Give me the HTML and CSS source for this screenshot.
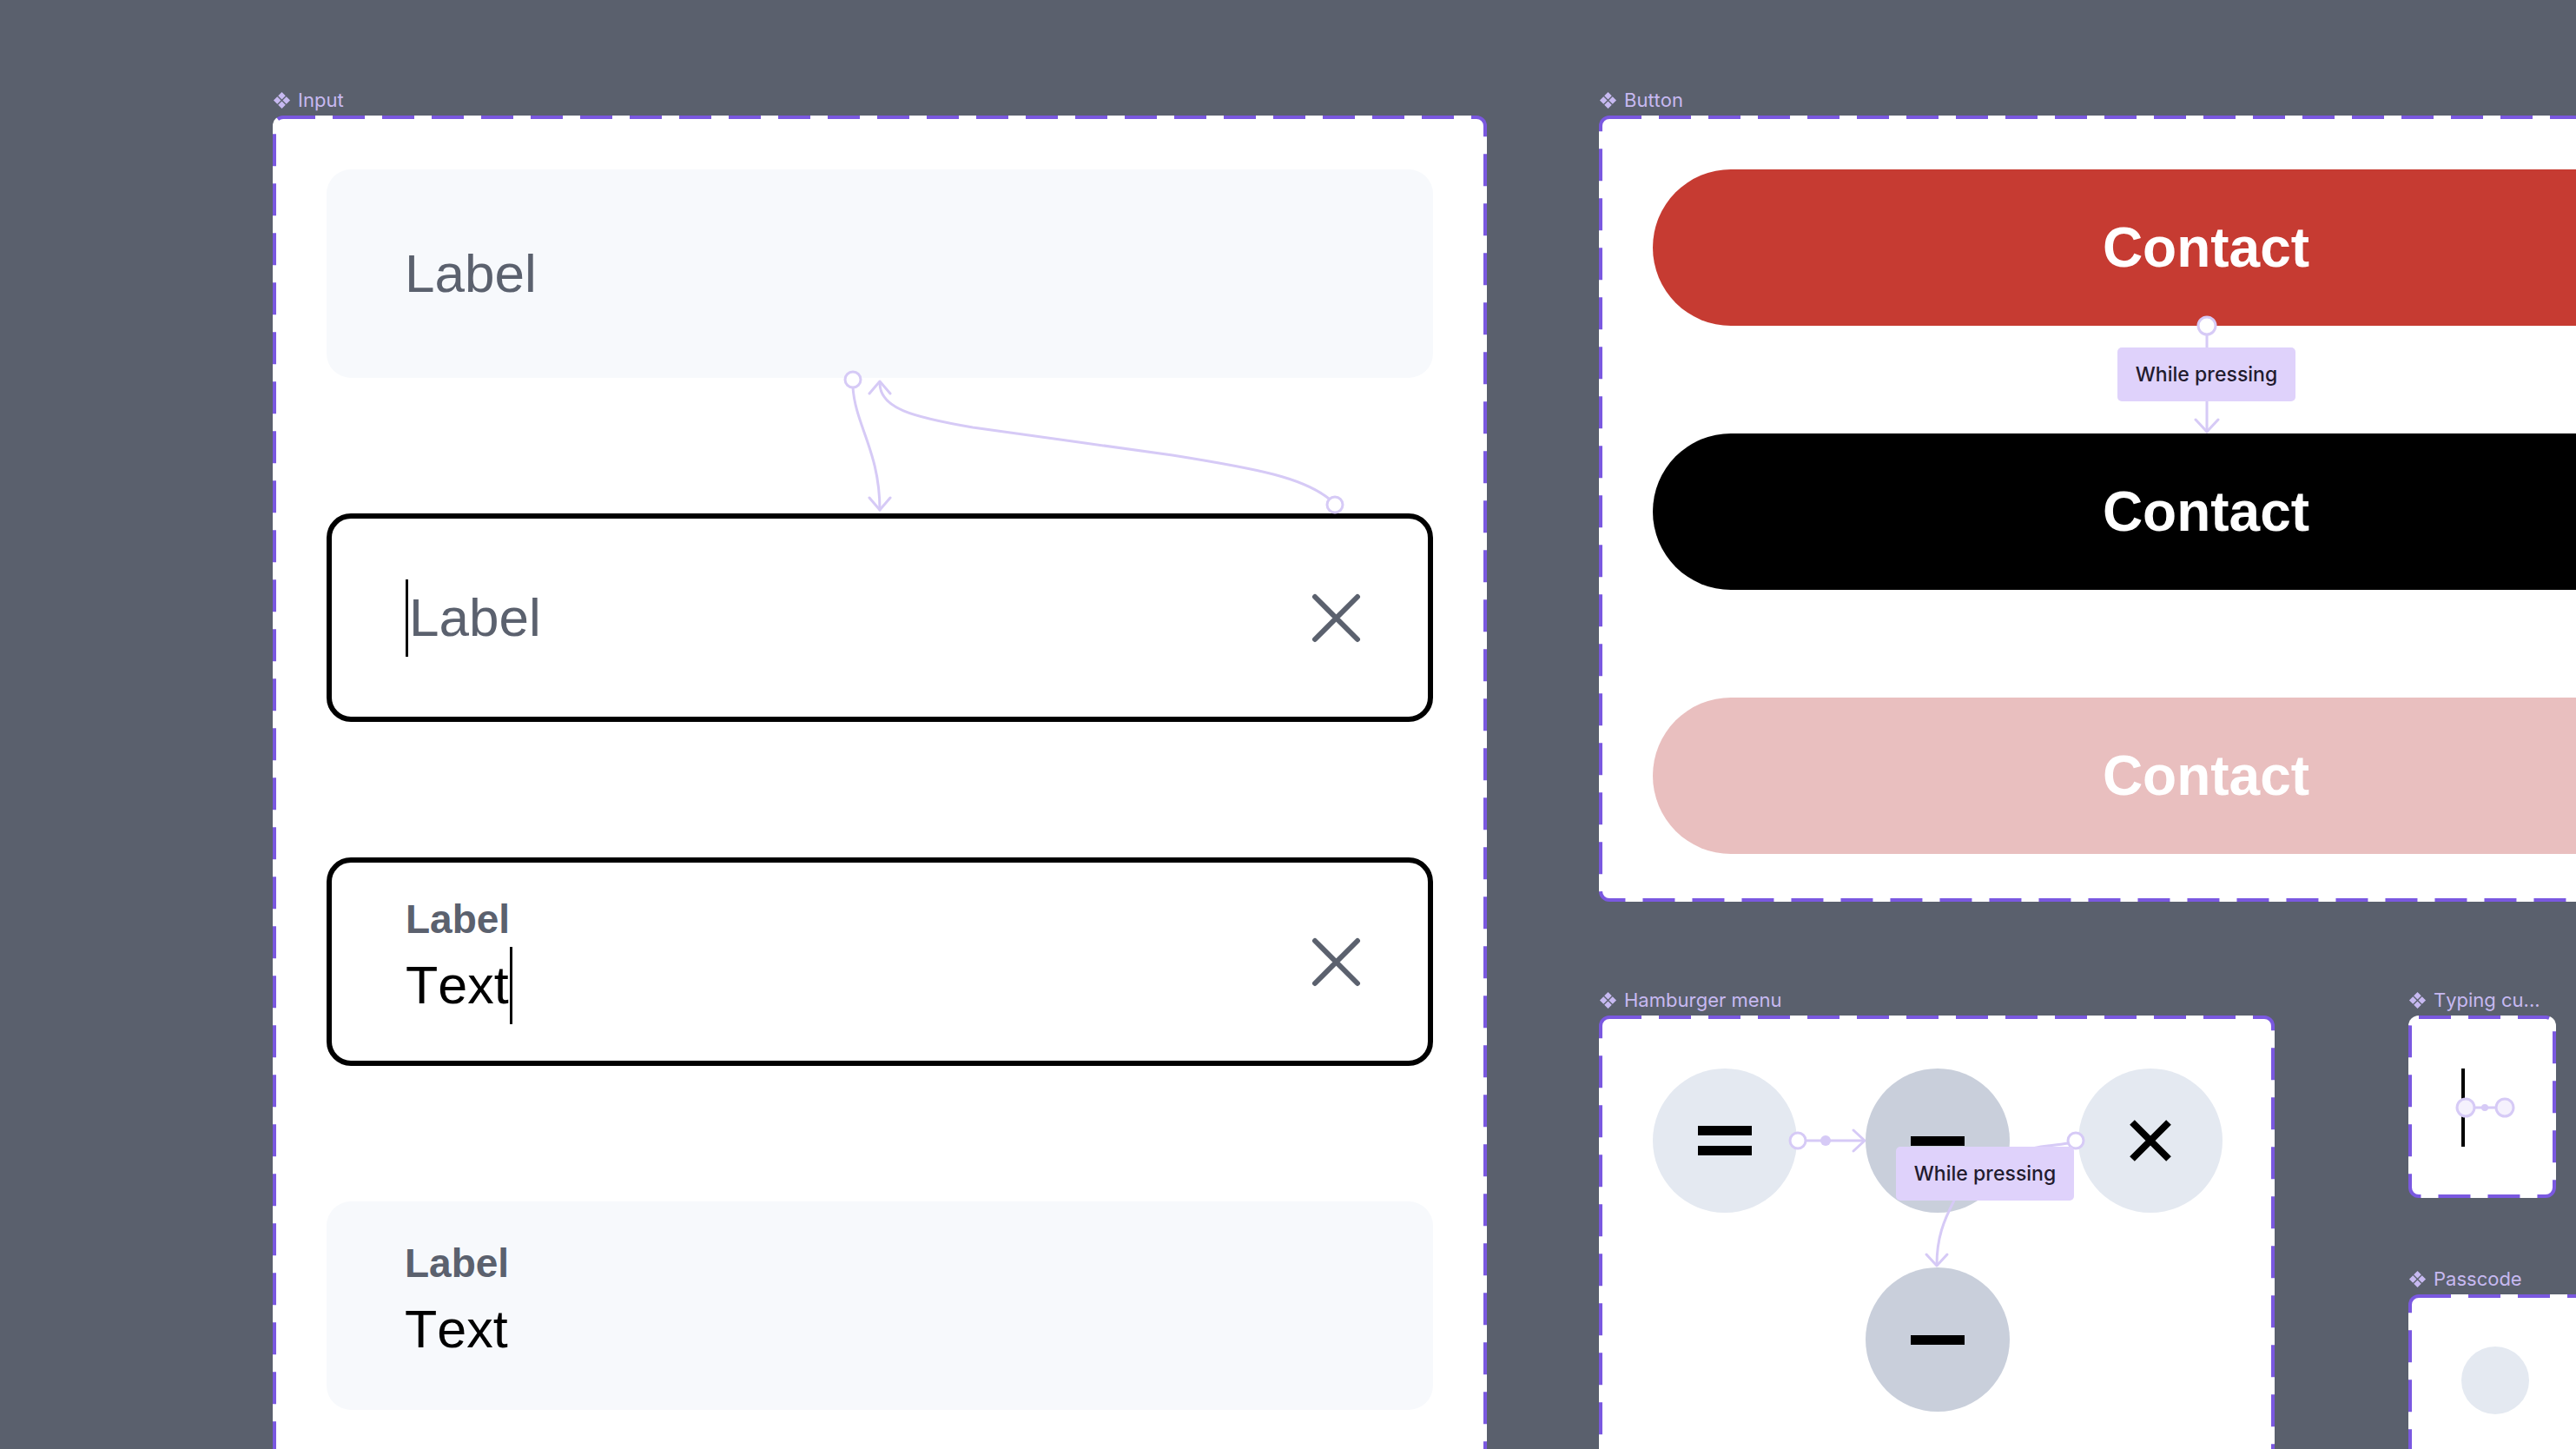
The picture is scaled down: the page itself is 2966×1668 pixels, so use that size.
FILE: index.html
```html
<!DOCTYPE html>
<html lang="en">
<head>
    <meta charset="UTF-8">
    <title>Components</title>
    <link rel="stylesheet" href="styles.css">
</head>
<body>
    <div class="canvas">

        <!-- Input -->
        <section class="frame-wrap input-wrap">
            <div class="frame-label">
                <svg class="comp-icon" viewBox="0 0 22 22"><path d="M11 1l4.5 4.5L11 10 6.5 5.5zM5.5 6.5L10 11l-4.5 4.5L1 11zM16.5 6.5L21 11l-4.5 4.5L12 11zM11 12l4.5 4.5L11 21l-4.5-4.5z"/></svg>
                <span>Input</span>
            </div>
            <div class="frame input-frame">
                <div class="field field-filled">
                    <span class="placeholder">Label</span>
                </div>
                <div class="field field-outline">
                    <div class="value">
                        <span class="caret"></span>
                        <span class="placeholder">Label</span>
                    </div>
                    <svg class="clear" viewBox="0 0 57 57"><path d="M4 4L53 53M53 4L4 53"/></svg>
                </div>
                <div class="field field-outline">
                    <div class="field-content">
                        <span class="small-label">Label</span>
                        <div class="value">
                            <span>Text</span>
                            <span class="caret"></span>
                        </div>
                    </div>
                    <svg class="clear" viewBox="0 0 57 57"><path d="M4 4L53 53M53 4L4 53"/></svg>
                </div>
                <div class="field field-filled">
                    <div class="field-content">
                        <span class="small-label">Label</span>
                        <div class="value">
                            <span>Text</span>
                        </div>
                    </div>
                </div>
            </div>
        </section>

        <!-- Button -->
        <section class="frame-wrap button-wrap">
            <div class="frame-label">
                <svg class="comp-icon" viewBox="0 0 22 22"><path d="M11 1l4.5 4.5L11 10 6.5 5.5zM5.5 6.5L10 11l-4.5 4.5L1 11zM16.5 6.5L21 11l-4.5 4.5L12 11zM11 12l4.5 4.5L11 21l-4.5-4.5z"/></svg>
                <span>Button</span>
            </div>
            <div class="frame button-frame">
                <div class="btn btn-red">Contact</div>
                <div class="btn btn-black">Contact</div>
                <div class="btn btn-pink">Contact</div>
            </div>
        </section>

        <!-- Hamburger menu -->
        <section class="frame-wrap burger-wrap">
            <div class="frame-label">
                <svg class="comp-icon" viewBox="0 0 22 22"><path d="M11 1l4.5 4.5L11 10 6.5 5.5zM5.5 6.5L10 11l-4.5 4.5L1 11zM16.5 6.5L21 11l-4.5 4.5L12 11zM11 12l4.5 4.5L11 21l-4.5-4.5z"/></svg>
                <span>Hamburger menu</span>
            </div>
            <div class="frame burger-frame">
                <div class="burger light">
                    <div class="bars">
                        <span class="bar"></span>
                        <span class="bar"></span>
                    </div>
                </div>
                <div class="burger dark">
                    <span class="bar"></span>
                </div>
                <div class="burger light">
                    <svg class="close" viewBox="0 0 48 48"><path d="M3 3L45 45M45 3L3 45"/></svg>
                </div>
                <div class="burger dark second-row">
                    <span class="bar"></span>
                </div>
            </div>
        </section>

        <!-- Typing cursor -->
        <section class="frame-wrap typing-wrap">
            <div class="frame-label">
                <svg class="comp-icon" viewBox="0 0 22 22"><path d="M11 1l4.5 4.5L11 10 6.5 5.5zM5.5 6.5L10 11l-4.5 4.5L1 11zM16.5 6.5L21 11l-4.5 4.5L12 11zM11 12l4.5 4.5L11 21l-4.5-4.5z"/></svg>
                <span>Typing cu...</span>
            </div>
            <div class="frame typing-frame">
                <span class="typing-caret"></span>
            </div>
        </section>

        <!-- Passcode -->
        <section class="frame-wrap passcode-wrap">
            <div class="frame-label">
                <svg class="comp-icon" viewBox="0 0 22 22"><path d="M11 1l4.5 4.5L11 10 6.5 5.5zM5.5 6.5L10 11l-4.5 4.5L1 11zM16.5 6.5L21 11l-4.5 4.5L12 11zM11 12l4.5 4.5L11 21l-4.5-4.5z"/></svg>
                <span>Passcode</span>
            </div>
            <div class="frame passcode-frame">
                <span class="dot"></span>
            </div>
        </section>

        <!-- prototype wires, over the frames -->
        <svg class="wires" viewBox="0 0 2966 1668">
            <g class="wire">
                <path d="M982 446C985 490 1013 520 1013 587"/>
                <path d="M1001 573L1013 587L1025 573"/>
                <path d="M1530 574C1500 550 1450 540 1350 524L1120 492C1050 480 1013 470 1013 441"/>
                <path d="M1001 453L1013 439L1025 453"/>
                <circle cx="982" cy="437" r="9"/>
                <circle cx="1537" cy="581" r="9"/>

                <path d="M2541 385V400"/>
                <path d="M2541 462V497"/>
                <path d="M2528 483L2541 497L2554 483"/>
                <circle cx="2541" cy="375" r="10"/>

                <path d="M2079 1313H2146"/>
                <path d="M2134 1301L2147 1313L2134 1325"/>
                <circle cx="2070" cy="1313" r="9"/>
                <path d="M2381 1316C2360 1320 2340 1318 2320 1330"/>
                <circle cx="2390" cy="1313" r="9"/>
                <path d="M2250 1382C2238 1405 2230 1425 2230 1456"/>
                <path d="M2218 1444L2230 1457L2242 1444"/>

                <path d="M2850 1275H2877"/>
                <circle class="soft" cx="2839" cy="1275" r="10"/>
                <circle class="soft" cx="2884" cy="1275" r="10"/>
            </g>
            <circle class="wire-dot" cx="2102" cy="1313" r="6"/>
            <circle class="wire-dot" cx="2861" cy="1275" r="4"/>
        </svg>

        <div class="tag tag-button">While pressing</div>
        <div class="tag tag-burger">While pressing</div>
    </div>
</body>
</html>
```

FILE: styles.css
```css
*{
    margin: 0;
    padding: 0;
    box-sizing: border-box;
}
body{
    background: #5a606d;
    overflow: hidden;
}
.canvas{
    position: relative;/*free canvas, frames sit at their own place*/
    width: 2966px;
    height: 1668px;
    overflow: hidden;
    font-family: "Liberation Sans", Arial, sans-serif;
    font-kerning: none;
}

/* frames */
.frame-wrap{
    position: absolute;
    display: flex;
    flex-direction: column;
    gap: 5px;
}
.input-wrap{ left: 314px; top: 102px; }
.button-wrap{ left: 1841px; top: 102px; }
.burger-wrap{ left: 1841px; top: 1138px; }
.typing-wrap{ left: 2773px; top: 1138px; }
.passcode-wrap{ left: 2773px; top: 1459px; }

.frame-label{
    display: flex;
    align-items: center;
    gap: 8px;
    height: 26px;
    font-family: Inter, "Noto Sans", sans-serif;
    font-size: 22px;
    line-height: 26px;
    color: #c7b9f1;
    white-space: nowrap;
}
.comp-icon{
    width: 21px;
    height: 21px;
    fill: #c7b9f1;
    flex: none;
}
.frame{
    border-radius: 12px;
    background: url("data:image/svg+xml,%3Csvg xmlns='http://www.w3.org/2000/svg' width='100%25' height='100%25'%3E%3Crect width='100%25' height='100%25' rx='12' fill='none' stroke='%237a58e0' stroke-width='8' stroke-dasharray='37 20'/%3E%3C/svg%3E"), #fff;
}

/* input */
.input-frame{
    width: 1398px;
    padding: 62px;
    display: flex;
    flex-direction: column;
    gap: 156px;
}
.field{
    height: 240px;
    border-radius: 28px;
    display: flex;
    align-items: center;
    padding: 0 83px 0 90px;
}
.field-filled{
    background: #f7f9fc;
}
.field-outline{
    background: #fff;
    border: 6px solid #000;
    padding: 0 77px 0 85px;
}
.field-content{
    display: flex;
    flex-direction: column;
    gap: 9px;
}
.placeholder{
    font-size: 62px;
    line-height: 1;
    color: #5b616e;
}
.small-label{
    font-size: 46px;
    font-weight: bold;
    line-height: 1;
    color: #5b616e;
}
.value{
    display: flex;
    align-items: center;
    height: 90px;
    font-size: 61px;
    line-height: 1;
    color: #000;
}
.caret{
    width: 3px;
    height: 89px;
    background: #000;
    margin-right: 1px;
}
.value span + .caret{
    margin: 0 0 0 1px;
}
.clear{
    width: 57px;
    height: 57px;
    margin-left: auto;
    stroke: #5b616e;
    stroke-width: 6;
    stroke-linecap: round;
    fill: none;
}

/* button */
.button-frame{
    width: 1398px;
    padding: 62px 62px 55px;
    display: flex;
    flex-direction: column;
    gap: 124px;
}
.btn{
    height: 180px;
    border-radius: 90px;
    display: flex;
    align-items: center;
    justify-content: center;
    font-size: 64px;
    font-weight: bold;
    line-height: 1;
    color: #fff;
}
.btn-red{ background: #c63b32; }
.btn-black{ background: #000; }
.btn-pink{ background: #e9bfbf; }

/* hamburger */
.burger-frame{
    width: 778px;
    height: 560px;
    padding: 61px 62px;
    display: grid;
    grid-template-columns: repeat(3, 166px);
    grid-auto-rows: 166px;
    column-gap: 79px;
    row-gap: 63px;
}
.burger{
    border-radius: 50%;
    display: flex;
    align-items: center;
    justify-content: center;
}
.burger.light{ background: #e4e9f1; }
.burger.dark{ background: #c9cfdb; }
.burger.second-row{ grid-column: 2; }
.bars{
    display: flex;
    flex-direction: column;
    gap: 12px;
}
.bar{
    display: block;
    width: 62px;
    height: 11px;
    background: #000;
}
.close{
    width: 48px;
    height: 48px;
    stroke: #000;
    stroke-width: 8;
    fill: none;
}

/* typing cursor */
.typing-frame{
    width: 170px;
    height: 210px;
    padding: 61px 0 0 61px;
}
.typing-caret{
    display: block;
    width: 4px;
    height: 90px;
    background: #000;
}

/* passcode */
.passcode-frame{
    width: 420px;
    height: 260px;
    padding: 60px 0 0 61px;
}
.dot{
    display: block;
    width: 78px;
    height: 78px;
    border-radius: 50%;
    background: #e4e9f1;
}

/* wires and tags */
.wires{
    position: absolute;
    left: 0;
    top: 0;
    width: 2966px;
    height: 1668px;
    pointer-events: none;
}
.wire{
    fill: none;
    stroke: #d6caf6;
    stroke-width: 3;
    stroke-linecap: round;
    stroke-linejoin: round;
}
.wire circle{
    fill: #fff;
}
.wire circle.soft{
    fill: #f5f1fd;
}
.wire-dot{
    fill: #d6caf6;
}
.tag{
    position: absolute;/*sits over the wire*/
    width: 205px;
    height: 62px;
    display: flex;
    align-items: center;
    justify-content: center;
    background: #dfd2fb;
    border-radius: 5px;
    font-family: Inter, "Noto Sans", sans-serif;
    font-size: 23px;
    font-weight: 500;
    color: #221b2e;
}
.tag-button{ left: 2438px; top: 400px; }
.tag-burger{ left: 2183px; top: 1320px; }
```
